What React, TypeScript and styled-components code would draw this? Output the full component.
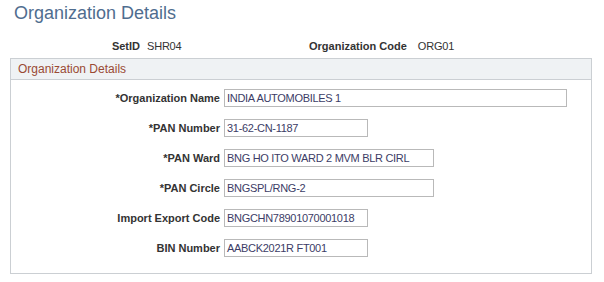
import styled, { createGlobalStyle } from 'styled-components';

const GlobalStyle = createGlobalStyle`
  html, body {
    margin: 0;
    padding: 0;
    background: #fff;
    font-family: Arial, 'Liberation Sans', sans-serif;
  }
`;

const Page = styled.div`
  width: 604px;
  height: 282px;
  overflow: hidden;
  display: flex;
  flex-direction: column;
`;

const Title = styled.h1`
  margin: 3px 0 0 14px;
  font-size: 18px;
  font-weight: normal;
  line-height: 21px;
  color: #4f6d8f;
`;

const KeyRow = styled.div`
  display: grid;
  grid-template-columns: 140px 169px auto auto;
  justify-content: start;
  margin-top: 15px;
  font-size: 11px;
  line-height: 14px;
  white-space: nowrap;
`;

const KeyLabel = styled.span`
  font-weight: bold;
  color: #333;
  text-align: right;
`;

const KeyValue = styled.span<{ $indent: number }>`
  color: #333;
  padding-left: ${(p) => p.$indent}px;
  letter-spacing: -0.2px;
`;

const GroupBox = styled.section`
  margin: 5px 0 0 10px;
  width: 580px;
  height: 214px;
  border: 1px solid #cbcfd3;
`;

const GroupHeader = styled.div`
  height: 20px;
  background: #eff2f4;
  border-bottom: 1px solid #cbcfd3;
  padding-left: 7px;
  font-size: 12px;
  line-height: 20px;
  color: #9a4a33;
`;

const Form = styled.div`
  display: flex;
  flex-direction: column;
  gap: 12px;
  padding-top: 9px;
`;

const Row = styled.div`
  display: flex;
  align-items: center;
  height: 18px;
`;

const Label = styled.label`
  width: 209px;
  margin-right: 4px;
  text-align: right;
  font-size: 11px;
  font-weight: bold;
  color: #333;
  white-space: nowrap;
`;

const Input = styled.div<{ $width: number }>`
  box-sizing: border-box;
  width: ${(p) => p.$width}px;
  height: 18px;
  border: 1px solid #b9b9b9;
  padding: 0 2px;
  font-size: 11px;
  line-height: 16px;
  letter-spacing: -0.3px;
  color: #3c3c66;
  white-space: nowrap;
  overflow: hidden;
`;

const fields = [
  { label: '*Organization Name', value: 'INDIA AUTOMOBILES 1', width: 343 },
  { label: '*PAN Number', value: '31-62-CN-1187', width: 144 },
  { label: '*PAN Ward', value: 'BNG HO ITO WARD 2 MVM BLR CIRL', width: 210 },
  { label: '*PAN Circle', value: 'BNGSPL/RNG-2', width: 210 },
  { label: 'Import Export Code', value: 'BNGCHN78901070001018', width: 144 },
  { label: 'BIN Number', value: 'AABCK2021R FT001', width: 144 },
];

const App = () => {
  return (
    <Page>
      <GlobalStyle />
      <Title>Organization Details</Title>
      <KeyRow>
        <KeyLabel>SetID</KeyLabel>
        <KeyValue $indent={7}>SHR04</KeyValue>
        <KeyLabel>Organization Code</KeyLabel>
        <KeyValue $indent={11}>ORG01</KeyValue>
      </KeyRow>
      <GroupBox>
        <GroupHeader>Organization Details</GroupHeader>
        <Form>
          {fields.map((f) => (
            <Row key={f.label}>
              <Label>{f.label}</Label>
              <Input $width={f.width}>{f.value}</Input>
            </Row>
          ))}
        </Form>
      </GroupBox>
    </Page>
  );
};

export default App;
